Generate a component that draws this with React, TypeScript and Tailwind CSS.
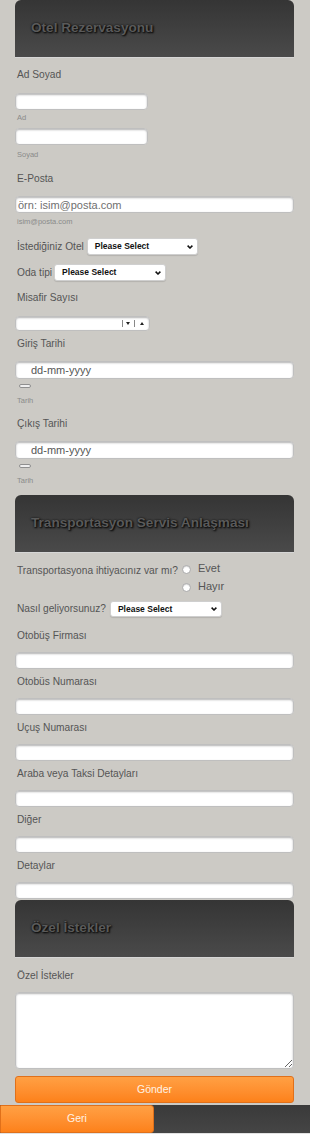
import React from "react";

const Header = ({ title, className = "" }: { title: string; className?: string }) => (
  <div
    className={`h-[58px] rounded-t-[6px] bg-gradient-to-b from-[#353535] to-[#4a4a4a] border-b border-[#d6d6d6] flex items-center pl-[16px] ${className}`}
  >
    <span className="text-[13.6px] font-bold text-[#5a5a5a] [text-shadow:1px_1px_2px_#000,0_0_2px_#111]">
      {title}
    </span>
  </div>
);

const Label = ({ children, className = "" }: { children: React.ReactNode; className?: string }) => (
  <div className={`h-[12px] leading-[12px] text-[10.2px] text-[#555] pl-[2px] whitespace-nowrap ${className}`}>
    {children}
  </div>
);

const Sub = ({ children, className = "" }: { children: React.ReactNode; className?: string }) => (
  <div className={`h-[9px] leading-[9px] text-[7.5px] text-[#8a8a8a] pl-[2px] ${className}`}>{children}</div>
);

const inputCls =
  "block bg-white border border-[#bfbfbf] rounded-[4px] shadow-[inset_0_1px_2px_rgba(0,0,0,0.3)] outline-none";

const Chevron = () => (
  <svg width="6" height="4" viewBox="0 0 6 4" className="shrink-0">
    <path d="M0.6 0.6 L3 3 L5.4 0.6" fill="none" stroke="#111" strokeWidth="1.5" />
  </svg>
);

const Select = ({ className = "" }: { className?: string }) => (
  <div
    className={`flex items-center justify-between bg-white border border-[#cfcfcf] rounded-[3px] shadow-[0_1px_1px_rgba(0,0,0,0.12)] pl-[7px] pr-[4px] ${className}`}
  >
    <span className="text-[8.5px] font-bold text-[#111] leading-none">Please Select</span>
    <Chevron />
  </div>
);

const Radio = () => (
  <span className="inline-block w-[9px] h-[9px] rounded-full bg-white border border-[#a8a8a8] shadow-[inset_0_1px_1px_rgba(0,0,0,0.15)]" />
);

const Pill = ({ className = "" }: { className?: string }) => (
  <div className={`ml-[4px] w-[12px] h-[4px] rounded-[2px] bg-[#efefef] border border-[#8f8f8f] ${className}`} />
);

export default function App() {
  return (
    <div
      className="w-[310px] min-h-[1134px] bg-[#cccac5] flex flex-col"
      style={{ fontFamily: '"Liberation Sans", Arial, sans-serif' }}
    >
      <div className="pl-[15px] pr-[16px] flex flex-col">
        <Header title="Otel Rezervasyonu" />

        <Label className="mt-[11px]">Ad Soyad</Label>
        <input className={`${inputCls} mt-[12px] w-[133px] h-[17px]`} />
        <Sub className="mt-[3px]">Ad</Sub>
        <input className={`${inputCls} mt-[6px] w-[133px] h-[17px]`} />
        <Sub className="mt-[5px]">Soyad</Sub>

        <Label className="mt-[14px]">E-Posta</Label>
        <input
          className={`${inputCls} mt-[11px] w-full h-[17px] px-[2px] text-[11px] text-[#333] placeholder:text-[#6f6f6f]`}
          placeholder="örn: isim@posta.com"
        />
        <Sub className="mt-[4px]">isim@posta.com</Sub>

        <div className="mt-[12px] flex items-center gap-[3px]">
          <Label>İstediğiniz Otel</Label>
          <Select className="w-[111px] h-[17px]" />
        </div>
        <div className="mt-[9px] flex items-center gap-[2px]">
          <Label>Oda tipi</Label>
          <Select className="w-[112px] h-[17px]" />
        </div>

        <Label className="mt-[11px]">Misafir Sayısı</Label>
        <div className="mt-[12px] w-[135px] h-[15px] bg-white border border-[#bfbfbf] rounded-[4px] shadow-[inset_0_1px_2px_rgba(0,0,0,0.3)] flex items-center justify-end pr-[5px]">
          <span className="w-px h-[7px] bg-[#888]" />
          <svg width="4" height="3" viewBox="0 0 4 3" className="ml-[3px]">
            <path d="M0 0 L4 0 L2 3 Z" fill="#222" />
          </svg>
          <span className="ml-[4px] w-px h-[7px] bg-[#888]" />
          <svg width="4" height="3" viewBox="0 0 4 3" className="ml-[5px]">
            <path d="M0 3 L4 3 L2 0 Z" fill="#222" />
          </svg>
        </div>

        <Label className="mt-[7px]">Giriş Tarihi</Label>
        <input
          className={`${inputCls} mt-[11px] w-full h-[18px] pl-[15px] text-[11px] placeholder:text-[#555]`}
          placeholder="dd-mm-yyyy"
        />
        <Pill className="mt-[5px]" />
        <Sub className="mt-[8px]">Tarih</Sub>

        <Label className="mt-[13px]">Çıkış Tarihi</Label>
        <input
          className={`${inputCls} mt-[11px] w-full h-[18px] pl-[15px] text-[11px] placeholder:text-[#555]`}
          placeholder="dd-mm-yyyy"
        />
        <Pill className="mt-[5px]" />
        <Sub className="mt-[8px]">Tarih</Sub>

        <Header title="Transportasyon Servis Anlaşması" className="mt-[10px]" />

        <div className="mt-[7px] flex items-start">
          <Label className="mt-[5px]">Transportasyona ihtiyacınız var mı?</Label>
          <div className="ml-[4px] flex flex-col">
            <div className="h-[18px] flex items-center gap-[7px]">
              <Radio />
              <span className="text-[11px] text-[#555] leading-none -mt-[2px]">Evet</span>
            </div>
            <div className="h-[18px] flex items-center gap-[7px]">
              <Radio />
              <span className="text-[11px] text-[#555] leading-none -mt-[2px]">Hayır</span>
            </div>
          </div>
        </div>

        <div className="mt-[5px] flex items-center gap-[4px]">
          <Label>Nasıl geliyorsunuz?</Label>
          <Select className="w-[112px] h-[16px]" />
        </div>

        <Label className="mt-[13px]">Otobüş Firması</Label>
        <input className={`${inputCls} mt-[10px] w-full h-[17px]`} />
        <Label className="mt-[7px]">Otobüs Numarası</Label>
        <input className={`${inputCls} mt-[10px] w-full h-[17px]`} />
        <Label className="mt-[7px]">Uçuş Numarası</Label>
        <input className={`${inputCls} mt-[10px] w-full h-[17px]`} />
        <Label className="mt-[7px]">Araba veya Taksi Detayları</Label>
        <input className={`${inputCls} mt-[10px] w-full h-[17px]`} />
        <Label className="mt-[7px]">Diğer</Label>
        <input className={`${inputCls} mt-[10px] w-full h-[17px]`} />
        <Label className="mt-[7px]">Detaylar</Label>
        <input className={`${inputCls} mt-[10px] w-full h-[17px]`} />

        <Header title="Özel İstekler" className="mt-[1px]" />

        <Label className="mt-[12px]">Özel İstekler</Label>
        <textarea className={`${inputCls} mt-[10px] w-full h-[77px] resize-y`} />

        <button className="mt-[7px] h-[27px] w-full rounded-[3px] border border-[#e0701a] bg-gradient-to-b from-[#ffa043] to-[#fd8119] text-[10.5px] text-[#fff3e6]">
          Gönder
        </button>
      </div>

      <div className="mt-[2px] h-[28px] flex bg-gradient-to-b from-[#3a3a3a] to-[#454545]">
        <div className="w-[154px] h-full rounded-r-[3px] border border-[#e0701a] bg-gradient-to-b from-[#ffa043] to-[#fd8119] flex items-center justify-center text-[10.5px] text-[#fff3e6]">
          Geri
        </div>
      </div>
      <div className="h-[1px] bg-[#e2e2e2]" />
    </div>
  );
}
